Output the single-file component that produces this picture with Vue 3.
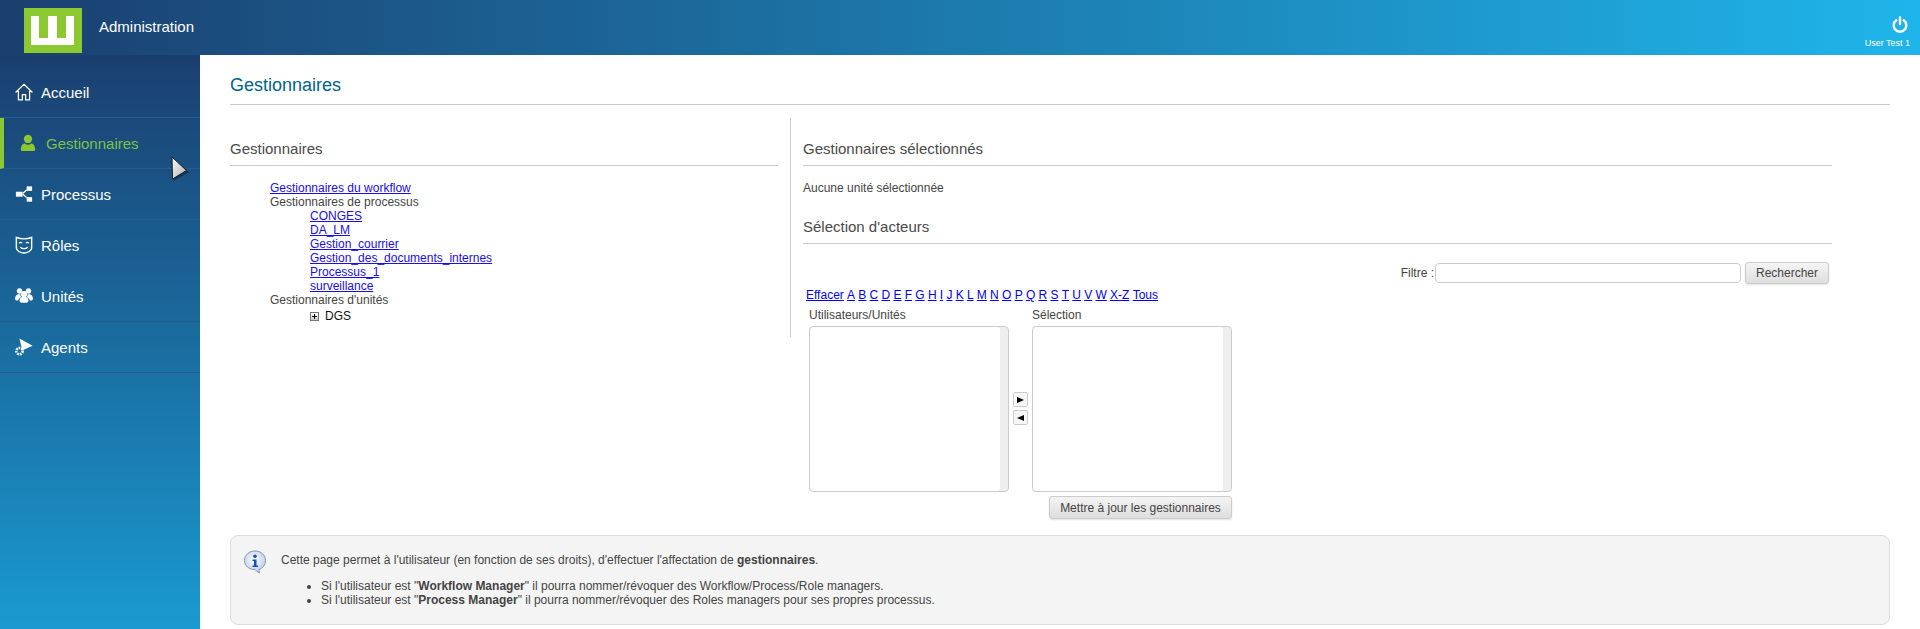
<script setup>
const menu = [
  { label: 'Accueil', icon: 'home' },
  { label: 'Gestionnaires', icon: 'user', active: true },
  { label: 'Processus', icon: 'proc' },
  { label: 'Rôles', icon: 'mask' },
  { label: 'Unités', icon: 'group' },
  { label: 'Agents', icon: 'agent' }
]
const processes = ['CONGES', 'DA_LM', 'Gestion_courrier', 'Gestion_des_documents_internes', 'Processus_1', 'surveillance']
const letters = ['Effacer', 'A', 'B', 'C', 'D', 'E', 'F', 'G', 'H', 'I', 'J', 'K', 'L', 'M', 'N', 'O', 'P', 'Q', 'R', 'S', 'T', 'U', 'V', 'W', 'X-Z', 'Tous']
</script>

<template>
  <div class="page">
    <header class="top">
      <svg class="logo" width="58" height="45" viewBox="0 0 58 45">
        <rect width="58" height="45" fill="#8cc832" />
        <path d="M7 8H15V30H24V8H33V30H42V8H50V37H7Z" fill="#fff" />
      </svg>
      <span class="app">Administration</span>
      <div class="user">
        <svg width="16" height="17" viewBox="0 0 16 17" fill="none" stroke="#fff" stroke-width="2.4" stroke-linecap="round">
          <path d="M4.3 4.300a6.300 6.300 0 1 0 7.400 0" />
          <path d="M8 1.500V8" />
        </svg>
        <span>User Test 1</span>
      </div>
    </header>
    <div class="body">
      <nav class="side">
        <a v-for="m in menu" :key="m.label" class="item" :class="{ active: m.active }">
          <svg class="ic" width="18" height="18" viewBox="0 0 20 20">
            <g v-if="m.icon === 'home'" fill="none" stroke="#fff" stroke-width="1.400">
              <path d="M.6 10.500 10 1.500l9.400 9M3.800 8.500V18.800h4.400v-6h3.600v6h4.400V8.500" />
            </g>
            <g v-else-if="m.icon === 'user'" fill="#8cc832">
              <circle cx="10" cy="5.500" r="4.600" />
              <path d="M2 17.500c0-4 2-7 4.500-7 1 1 2 1.500 3.500 1.500s2.500-.5 3.500-1.500c2.500 0 4.500 3 4.500 7 0 1-1 1.500-2 1.500H4c-1 0-2-.5-2-1.500Z" />
            </g>
            <g v-else-if="m.icon === 'proc'" fill="#fff">
              <rect x="1" y="7.500" width="7.500" height="5.500" />
              <rect x="13" y="1.500" width="6" height="5" />
              <rect x="13" y="13.500" width="6" height="5" />
              <path d="M8 9 13 4.500v2L9 10ZM8 10.500l5 4.500v-2l-4-3.500Z" />
            </g>
            <g v-else-if="m.icon === 'mask'">
              <path d="M1.500 1.500c5 2 12 2 17 0v11.500c0 3.500-4.500 5.800-8.500 5.800s-8.500-2.300-8.500-5.800Z" fill="none" stroke="#fff" stroke-width="1.600" />
              <path d="M4.500 8c1-1 2.500-1 3.500 0M12 8c1-1 2.500-1 3.500 0M6 12.500c2 2 6 2 8 0" fill="none" stroke="#fff" stroke-width="1.300" />
            </g>
            <g v-else-if="m.icon === 'group'" fill="#fff">
              <circle cx="5" cy="4.500" r="3" />
              <circle cx="15" cy="4.500" r="3" />
              <circle cx="10" cy="8" r="3.500" />
              <path d="M0 13c0-3 2-5 4-5h2c-.5 2 1 3 1 3-2 1-3 2-3.500 4C1 15 0 14.500 0 13ZM20 13c0-3-2-5-4-5h-2c.5 2-1 3-1 3 2 1 3 2 3.500 4 2.500 0 3.500-.5 3.500-2ZM5 15.500c0-3 2-4.500 3-4.500h4c1 0 3 1.500 3 4.500 0 1.500-2 2-5 2s-5-.5-5-2Z" />
            </g>
            <g v-else fill="#fff">
              <path d="M5 .5 19.500 8.500 8 14Z" />
              <circle cx="5" cy="14.500" r="3.500" fill="none" stroke="#fff" stroke-width="2.800" stroke-dasharray="2 1" />
            </g>
          </svg>
          <span>{{ m.label }}</span>
        </a>
      </nav>
      <main class="main">
        <h1>Gestionnaires</h1>
        <div class="cols">
          <section class="left">
            <h2>Gestionnaires</h2>
            <ul class="tree">
              <li><a href="#">Gestionnaires du workflow</a></li>
              <li>Gestionnaires de processus
                <ul>
                  <li v-for="p in processes" :key="p"><a href="#">{{ p }}</a></li>
                </ul>
              </li>
              <li>Gestionnaires d'unités
                <ul>
                  <li class="dgs"><span class="plus"></span>DGS</li>
                </ul>
              </li>
            </ul>
          </section>
          <section class="right">
            <h2>Gestionnaires sélectionnés</h2>
            <p class="none">Aucune unité sélectionnée</p>
            <h2 class="second">Sélection d'acteurs</h2>
            <div class="filter">
              <label>Filtre :</label>
              <input type="text" />
              <button class="btn search">Rechercher</button>
            </div>
            <div class="letters">
              <a v-for="l in letters" :key="l" href="#">{{ l }}</a>
            </div>
            <div class="picker">
              <div class="pick">
                <span class="lab">Utilisateurs/Unités</span>
                <div class="box"></div>
              </div>
              <div class="arrows">
                <button class="arrow"><i class="tri r"></i></button>
                <button class="arrow"><i class="tri l"></i></button>
              </div>
              <div class="pick">
                <span class="lab">Sélection</span>
                <div class="box"></div>
                <button class="btn update">Mettre à jour les gestionnaires</button>
              </div>
            </div>
          </section>
        </div>
        <div class="info">
          <svg class="bubble" width="24" height="24" viewBox="0 0 24 24">
            <defs>
              <radialGradient id="bub" cx="45%" cy="40%" r="65%">
                <stop offset="0" stop-color="#fff" />
                <stop offset="1" stop-color="#b4c8ee" />
              </radialGradient>
            </defs>
            <path d="M12 1c6 0 10.500 4 10.500 9.500 0 4.500-3 8-6.500 9l.5 3.500c-2-1-3.500-2.500-4.500-3.500C6 19.500 1.500 16 1.500 10.500 1.500 5 6 1 12 1Z" fill="url(#bub)" stroke="#8d93a8" stroke-width="1" />
            <circle cx="12" cy="6.300" r="1.800" fill="#1450b8" />
            <path d="M9.500 9.500h4v6h1.500v1.500H9.500v-1.500H11v-4.500H9.500Z" fill="#1450b8" />
          </svg>
          <div class="txt">
            <p>Cette page permet à l'utilisateur (en fonction de ses droits), d'effectuer l'affectation de <b>gestionnaires</b>.</p>
            <ul>
              <li>Si l'utilisateur est "<b>Workflow Manager</b>" il pourra nommer/révoquer des Workflow/Process/Role managers.</li>
              <li>Si l'utilisateur est "<b>Process Manager</b>" il pourra nommer/révoquer des Roles managers pour ses propres processus.</li>
            </ul>
          </div>
        </div>
      </main>
    </div>
    <svg class="cursor" width="20" height="27" viewBox="0 0 20 27">
      <defs>
        <linearGradient id="cur" x1="0" y1="0" x2="1" y2="1">
          <stop offset="0" stop-color="#fff" />
          <stop offset="1" stop-color="#a8acb0" />
        </linearGradient>
      </defs>
      <path d="M2 2 18 16 3 25Z" fill="#0c2038" opacity=".55" />
      <path d="M1 1 15.500 14.500 1.500 23Z" fill="url(#cur)" stroke="#1c1c1c" stroke-width="1" />
    </svg>
  </div>
</template>

<style>
html, body { margin: 0; background: #fff; }
</style>

<style scoped>
.page { position: relative; width: 1920px; height: 629px; overflow: hidden; font-family: "Liberation Sans", Arial, sans-serif; font-size: 12px; color: #444; }
.top { height: 55px; display: flex; align-items: flex-start; color: #fff; background: linear-gradient(90deg, #1a3f6f 0%, #1fb5ea 100%); }
.logo { margin: 8px 0 0 24px; }
.app { margin: 19px 0 0 17px; font-size: 15px; line-height: 16px; }
.user { margin-left: auto; margin-right: 10px; display: flex; flex-direction: column; align-items: flex-end; }
.user svg { margin: 16px 2px 0 0; }
.user span { margin-top: 5px; font-size: 9px; line-height: 11px; color: #fff; }
.body { display: flex; height: 574px; }
.side { box-sizing: border-box; width: 200px; flex: none; padding-top: 12px; background: linear-gradient(180deg, #1a3f6f 0%, #1a9ad0 100%); }
.item { box-sizing: border-box; display: flex; align-items: center; height: 51px; padding-left: 15px; gap: 8px; color: #fff; font-size: 15px; border-bottom: 1px solid #255a92; }
.item.active { color: #7cc243; border-left: 4px solid #8cc832; padding-left: 15px; gap: 9px; }
.ic { flex: none; }
.main { flex: 1; padding: 0 30px; min-width: 0; }
h1 { margin: 0; box-sizing: border-box; height: 50px; padding-top: 19px; font-size: 18px; line-height: 22px; font-weight: normal; color: #00628c; border-bottom: 1px solid #ccc; }
h2 { margin: 0; box-sizing: border-box; height: 28px; font-size: 15px; line-height: 20px; padding-top: 1px; font-weight: normal; color: #4a4a4a; border-bottom: 1px solid #ccc; }
.cols { display: flex; margin-top: 13px; height: 417px; }
.left { width: 548px; padding: 20px 12px 0 0; height: 200px; }
.right { position: relative; flex: none; width: 1029px; height: 394px; padding: 20px 0 0 13px; }
.right::before { content: ""; position: absolute; left: 0; top: 0; height: 219px; border-left: 1px solid #ccc; }
.tree, .tree ul { list-style: none; margin: 0; padding: 0; }
.tree { margin-top: 15px; padding-left: 40px; line-height: 14px; }
.tree ul { padding-left: 40px; }
.tree a, .letters a { color: #00e; text-decoration: underline; }
.tree a { color: #1a0ee6; }
.dgs { display: flex; align-items: center; color: #111; margin-top: 2px; gap: 6px; }
.plus { box-sizing: border-box; position: relative; width: 9px; height: 9px; border: 1px solid #777; background: linear-gradient(#fff, #ccc); }
.plus::before { content: ""; position: absolute; left: 1px; top: 3px; width: 5px; height: 1px; background: #000; }
.plus::after { content: ""; position: absolute; left: 3px; top: 1px; width: 1px; height: 5px; background: #000; }
.none { margin: 15px 0 0; line-height: 14px; font-size: 12px; }
.second { margin-top: 21px; }
.filter { display: flex; align-items: center; justify-content: flex-end; margin-top: 18px; padding-right: 3px; height: 22px; }
.filter label { margin-right: 1px; }
.filter input { box-sizing: border-box; width: 306px; height: 20px; border: 1px solid #ccc; border-radius: 4px; background: #fff; margin: 0 4px 0 0; padding: 0; }
.btn { font: 12px "Liberation Sans", Arial, sans-serif; color: #444; border: 1px solid #ccc; border-radius: 3px; background: linear-gradient(#f4f4f4, #dedede); box-shadow: 0 1px 2px rgba(0,0,0,.12); padding: 0; }
.search { width: 84px; height: 22px; }
.letters { display: flex; gap: 3.25px; margin: 3px 0 0 3px; line-height: 16px; }
.picker { display: flex; align-items: flex-start; margin: 5px 0 0 6px; }
.pick { display: flex; flex-direction: column; width: 200px; }
.lab { line-height: 14px; margin-bottom: 4px; }
.box { box-sizing: border-box; height: 166px; border: 1px solid #ccc; border-radius: 4px; background: #fff; box-shadow: inset -8px 0 0 #eee; }
.arrows { width: 23px; display: flex; flex-direction: column; gap: 3px; padding: 84px 0 0 4px; box-sizing: border-box; }
.arrow { box-sizing: border-box; width: 15px; height: 15px; padding: 0; border: 1px solid #ccc; border-radius: 2px; background: #f6f6f6; display: flex; align-items: center; justify-content: center; }
.tri { display: block; width: 0; height: 0; border-top: 3.500px solid transparent; border-bottom: 3.500px solid transparent; }
.tri.r { border-left: 7px solid #000; }
.tri.l { border-right: 7px solid #000; }
.update { align-self: flex-end; width: 183px; height: 23px; margin-top: 4px; }
.info { box-sizing: border-box; display: flex; height: 90px; padding: 14px 0 0 12px; background: #f4f4f4; border: 1px solid #ddd; border-radius: 8px; }
.bubble { flex: none; margin-right: 14px; }
.txt p { margin: 3px 0 0; line-height: 14px; }
.txt ul { margin: 12px 0 0; padding: 0 0 0 40px; line-height: 14px; }
.cursor { position: absolute; left: 171px; top: 156px; }
</style>
